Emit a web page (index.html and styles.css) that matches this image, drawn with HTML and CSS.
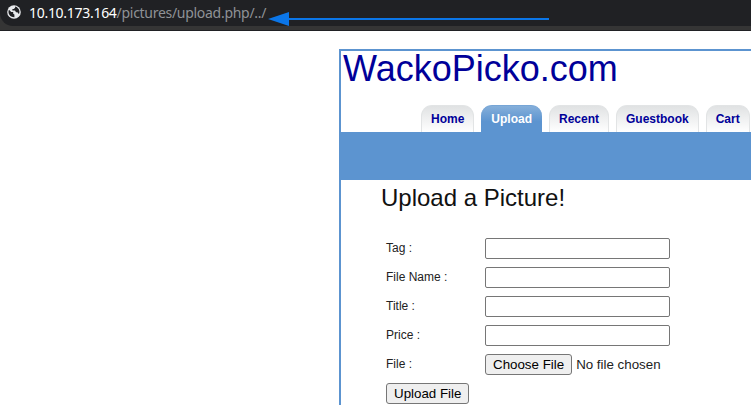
FILE: index.html
```html
<!DOCTYPE html>
<html lang="en">
<head>
<meta charset="utf-8">
<title>WackoPicko.com</title>
<link rel="stylesheet" href="styles.css">
</head>
<body>
<header class="browser">
  <div class="address">
    <svg class="globe" width="14" height="14" viewBox="0 0 14 14"><circle cx="7" cy="7" r="6.8" fill="#e8eaed"/><path d="M2 4.700L4.200 7H6.200v1.800l1.200.7v2.700C3.800 12.300 1.600 9.800 1.500 7c0-.9.1-1.600.5-2.300zM8.100 1.600v1.200L6.800 4H5.400v1.500H8l1 1.700h1.400l1 1.300.6.6c.8-2.100.6-4.200-1-5.900-.8-.8-1.800-1.400-2.900-1.600z" fill="#202124"/></svg>
    <div class="url"><span class="host">10.10.173.164</span>/pictures/upload.php/../</div>
    <svg class="arrow" width="282" height="14" viewBox="0 0 282 14"><path d="M0 7L21 0V14Z M20 6H281V8H20Z" fill="#0b76e8"/></svg>
  </div>
</header>
<main class="site">
  <h1 class="brand">WackoPicko.com</h1>
  <nav class="tabs">
    <a class="tab">Home</a>
    <a class="tab active">Upload</a>
    <a class="tab">Recent</a>
    <a class="tab">Guestbook</a>
    <a class="tab">Cart</a>
  </nav>
  <div class="band"></div>
  <section class="content">
    <h2>Upload a Picture!</h2>
    <form class="form">
      <label for="tag">Tag :</label><input id="tag" type="text">
      <label for="name">File Name :</label><input id="name" type="text">
      <label for="title">Title :</label><input id="title" type="text">
      <label for="price">Price :</label><input id="price" type="text">
      <label>File :</label><div class="file"><button type="button">Choose File</button><span>No file chosen</span></div>
      <button type="button">Upload File</button>
    </form>
  </section>
</main>
</body>
</html>
```
FILE: styles.css
```css
* { box-sizing: border-box; }
body {
  margin: 0;
  height: 405px;
  overflow: hidden;
  background: #fff;
  color: #222;
  font: 12px "Liberation Sans", Arial, sans-serif;
}
.browser {
  height: 31px;
  background: #353535;
  border-bottom: 1px solid #202124;
}
.address {
  position: relative;
  display: flex;
  align-items: center;
  height: 26px;
  padding-left: 7px;
  background: #202124;
  border-bottom-left-radius: 13px;
}
.globe { flex: none; margin: 0 8px 2px 0; }
.url {
  color: #8f9296;
  font: 14px/24px "Noto Sans", sans-serif;
  letter-spacing: -0.29px;
  white-space: nowrap;
}
.host { color: #fff; }
.arrow { position: absolute; left: 268px; top: 12px; }
.site {
  height: 356px;
  margin: 18px 0 0 339px;
  border: solid #5c94d0;
  border-width: 2px 0 0 2px;
}
.brand {
  height: 54px;
  margin: 0;
  padding-left: 2px;
  color: #000099;
  font-size: 36px;
  font-weight: 400;
  line-height: 36px;
}
.tabs { display: flex; gap: 7px; padding-left: 80px; }
.tab {
  height: 27px;
  padding: 0 9px;
  border: 1px solid #e2e4e5;
  border-bottom: 0;
  border-radius: 11px 11px 0 0;
  background: linear-gradient(#e0e2e3, #fff);
  color: #000099;
  font-weight: 700;
  line-height: 26px;
}
.active {
  border-color: #76a5d6;
  border-width: 1px 0 0;
  padding: 0 10px;
  background: linear-gradient(#85afda, #5c94d0 60%);
  color: #fff;
}
.band { height: 48px; background: #5c94d0; }
.content { padding-left: 40px; }
h2 {
  margin: 0;
  height: 58px;
  color: #111;
  font-size: 24px;
  font-weight: 400;
  line-height: 36px;
}
.form {
  display: grid;
  grid-template-columns: 99px max-content;
  grid-auto-rows: 21px;
  row-gap: 8px;
  padding-left: 5px;
}
label { line-height: 20px; }
input {
  width: 185px;
  height: 21px;
  border: 1px solid #767676;
  border-radius: 2px;
}
button {
  justify-self: start;
  height: 21px;
  padding: 0 7px;
  border: 1px solid #767676;
  border-radius: 3px;
  background: #efefef;
  color: #000;
  font: 13.333px "Liberation Sans", Arial, sans-serif;
  white-space: nowrap;
}
.file {
  display: flex;
  align-items: center;
  gap: 4px;
  font-size: 13.333px;
}
```
